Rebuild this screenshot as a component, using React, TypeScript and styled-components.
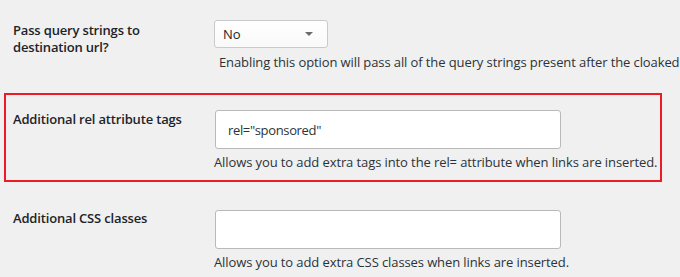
import React from "react";
import styled, { createGlobalStyle } from "styled-components";

const GlobalStyle = createGlobalStyle`
  html, body {
    margin: 0;
    padding: 0;
    background: #f0f0f1;
    overflow: hidden;
  }
  body {
    font-family: "Open Sans", "Noto Sans", sans-serif;
    font-size: 13px;
    color: #1d2327;
  }
`;

const Page = styled.div`
  width: 680px;
  height: 277px;
  display: flex;
  flex-direction: column;
  padding-top: 20px;
  box-sizing: border-box;
  overflow: hidden;
`;

const Row = styled.div<{ $highlight?: boolean; $gapTop?: number }>`
  display: flex;
  align-items: flex-start;
  box-sizing: border-box;
  margin-top: ${(p) => p.$gapTop ?? 0}px;
  ${(p) =>
    p.$highlight
      ? `
    margin-left: 4px;
    width: 658px;
    height: 89px;
    border: 2px solid #ec1c24;
    padding: 15px 0 0 7px;
  `
      : `
    padding-left: 13px;
  `}
`;

const Label = styled.div<{ $offset: number }>`
  width: 201px;
  flex: none;
  font-weight: 600;
  font-size: 13px;
  line-height: 17px;
  letter-spacing: -0.17px;
  color: #1d2327;
  padding-top: ${(p) => p.$offset}px;
  box-sizing: border-box;
`;

const Field = styled.div<{ $shift?: number }>`
  display: flex;
  flex-direction: column;
  align-items: flex-start;
  margin-left: ${(p) => p.$shift ?? 0}px;
`;

const Select = styled.div`
  width: 114px;
  height: 28px;
  box-sizing: border-box;
  border: 1px solid #c9cacc;
  border-radius: 3px;
  background: linear-gradient(#ffffff, #f9f9f9);
  display: flex;
  align-items: center;
  justify-content: space-between;
  padding: 0 14px 0 8px;
  font-size: 13px;
  color: #1d2327;
`;

const Caret = styled.span`
  width: 0;
  height: 0;
  border-left: 4px solid transparent;
  border-right: 4px solid transparent;
  border-top: 4px solid #6b6b6b;
`;

const TextInput = styled.div`
  width: 346px;
  height: 39px;
  box-sizing: border-box;
  border: 1px solid #b9b9b9;
  border-radius: 3px;
  background: #ffffff;
  display: flex;
  align-items: center;
  padding-left: 12px;
  font-size: 13px;
  letter-spacing: -0.35px;
  color: #2c3338;
`;

const Description = styled.p<{ $indent?: number; $gap: number }>`
  margin: ${(p) => p.$gap}px 0 0 ${(p) => p.$indent ?? 0}px;
  font-size: 13px;
  line-height: 18px;
  letter-spacing: -0.1px;
  color: #2c3338;
  white-space: nowrap;
`;

export default function App() {
  return (
    <>
      <GlobalStyle />
      <Page>
        <Row>
          <Label $offset={2}>
            Pass query strings to
            <br />
            destination url?
          </Label>
          <Field>
            <Select>
              <span>No</span>
              <Caret />
            </Select>
            <Description $gap={5} $indent={5}>
              Enabling this option will pass all of the query strings present after the cloaked
            </Description>
          </Field>
        </Row>
        <Row $highlight $gapTop={22}>
          <Label $offset={1}>Additional rel attribute tags</Label>
          <Field $shift={1}>
            <TextInput>rel="sponsored"</TextInput>
            <Description $gap={4} $indent={-1}>
              Allows you to add extra tags into the rel= attribute when links are inserted.
            </Description>
          </Field>
        </Row>
        <Row $gapTop={28}>
          <Label $offset={0}>Additional CSS classes</Label>
          <Field $shift={1}>
            <TextInput />
            <Description $gap={4} $indent={-1}>
              Allows you to add extra CSS classes when links are inserted.
            </Description>
          </Field>
        </Row>
      </Page>
    </>
  );
}
